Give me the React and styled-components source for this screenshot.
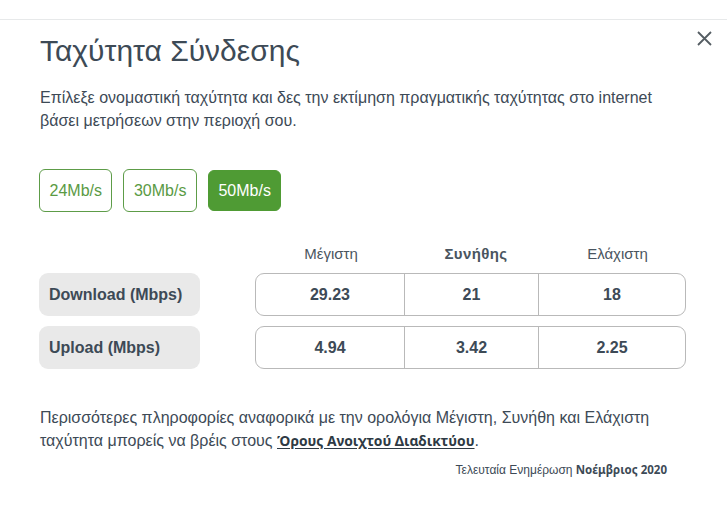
import React from "react";
import styled, { createGlobalStyle } from "styled-components";

const GlobalStyle = createGlobalStyle`
  html, body { margin: 0; padding: 0; background: #fff; }
  body { font-family: "Liberation Sans", Arial, sans-serif; }
`;

const sans = `"Liberation Sans", Arial, sans-serif`;

const Modal = styled.div`
  position: relative;
  margin-top: 19px;
  border-top: 1px solid #e7e9ea;
  padding: 13px 40px 0 40px;
  height: 496px;
  box-sizing: border-box;
  font-family: ${sans};
  color: #3d4a56;
`;

const Close = styled.button`
  position: absolute;
  top: 9px;
  right: 14px;
  width: 18px;
  height: 18px;
  padding: 0;
  border: 0;
  background: none;
  cursor: pointer;
  display: flex;
  align-items: center;
  justify-content: center;
`;

const Title = styled.h1`
  margin: 0;
  font-family: ${sans};
  font-weight: 400;
  font-size: 30px;
  line-height: 36px;
  color: #3d4a56;
`;

const Text = styled.p`
  margin: ${(p) => p.$mt}px 0 0 0;
  font-family: ${sans};
  font-size: 16px;
  line-height: 23px;
  color: #3d4a56;
`;

const Speeds = styled.div`
  display: flex;
  gap: 11px;
  margin-top: 37px;
  margin-left: -1px;
`;

const SpeedButton = styled.button`
  height: 43px;
  padding: 0 9.5px;
  border-radius: 6px;
  border: 1px solid ${(p) => (p.$active ? "#4f9b34" : "#5d9c48")};
  background: ${(p) => (p.$active ? "#4f9b34" : "#fff")};
  color: ${(p) => (p.$active ? "#fff" : "#5a9a44")};
  font-family: ${sans};
  font-size: 16px;
  cursor: pointer;
  ${(p) => p.$active && "height: 41px; margin-top: 1px;"}
`;

const Table = styled.div`
  margin-top: 31px;
  display: grid;
  grid-template-columns: 161px 1fr;
  column-gap: 55px;
  row-gap: 10px;
  width: 647px;
  margin-left: -1px;
`;

const HeadRow = styled.div`
  grid-column: 2;
  display: grid;
  grid-template-columns: 148px 134px 1fr;
  height: 20px;
  align-items: center;
`;

const Head = styled.div`
  text-align: center;
  font-family: ${sans};
  font-size: 15px;
  font-weight: ${(p) => (p.$bold ? 700 : 400)};
  color: #4a5560;
  letter-spacing: ${(p) => (p.$bold ? "0.4px" : "0")};
  padding-left: ${(p) => (p.$shift ? "12px" : "4px")};
`;

const Label = styled.div`
  grid-column: 1;
  height: 43px;
  border-radius: 9px;
  background: #e9e9e9;
  display: flex;
  align-items: center;
  padding-left: 10px;
  font-family: ${sans};
  font-weight: 700;
  font-size: 16px;
  color: #3d4a56;
`;

const Values = styled.div`
  grid-column: 2;
  height: 43px;
  box-sizing: border-box;
  border: 1px solid #b9b9b9;
  border-radius: 9px;
  display: grid;
  grid-template-columns: 148px 134px 1fr;
`;

const Cell = styled.div`
  display: flex;
  align-items: center;
  justify-content: center;
  font-family: ${sans};
  font-weight: 700;
  font-size: 16px;
  color: #3d4a56;
  & + & { border-left: 1px solid #b9b9b9; }
`;

const TermsLink = styled.a`
  font-family: "Noto Sans", "Open Sans", sans-serif;
  font-weight: 700;
  font-size: 13.8px;
  color: #2e3a44;
  text-decoration: underline;
  text-underline-offset: 2px;
`;

const Updated = styled.div`
  margin-top: 10px;
  width: 627px;
  text-align: right;
  font-family: ${sans};
  font-size: 12px;
  line-height: 16px;
  color: #3d4a56;
`;

const Strong = styled.span`
  font-family: "Noto Sans", "Open Sans", sans-serif;
  font-weight: 700;
  font-size: 11.5px;
`;

const speeds = ["24Mb/s", "30Mb/s", "50Mb/s"];
const rows = [
  { label: "Download (Mbps)", values: ["29.23", "21", "18"] },
  { label: "Upload (Mbps)", values: ["4.94", "3.42", "2.25"] },
];

export default function App() {
  return (
    <>
      <GlobalStyle />
      <Modal>
        <Close aria-label="close">
          <svg width="15" height="15" viewBox="0 0 15 15">
            <path d="M1 1 L14 14 M14 1 L1 14" stroke="#555d63" strokeWidth="1.8" fill="none" />
          </svg>
        </Close>
        <Title>Ταχύτητα Σύνδεσης</Title>
        <Text $mt={17}>
          Επίλεξε ονομαστική ταχύτητα και δες την εκτίμηση πραγματικής ταχύτητας στο internet
          <br />
          βάσει μετρήσεων στην περιοχή σου.
        </Text>
        <Speeds>
          {speeds.map((s, i) => (
            <SpeedButton key={s} $active={i === 2}>
              {s}
            </SpeedButton>
          ))}
        </Speeds>
        <Table>
          <HeadRow>
            <Head>Μέγιστη</Head>
            <Head $bold $shift>Συνήθης</Head>
            <Head $shift>Ελάχιστη</Head>
          </HeadRow>
          {rows.map((r) => (
            <React.Fragment key={r.label}>
              <Label>{r.label}</Label>
              <Values>
                {r.values.map((v, i) => (
                  <Cell key={i}>{v}</Cell>
                ))}
              </Values>
            </React.Fragment>
          ))}
        </Table>
        <Text $mt={37}>
          Περισσότερες πληροφορίες αναφορικά με την ορολόγια Μέγιστη, Συνήθη και Ελάχιστη
          <br />
          ταχύτητα μπορείς να βρέις στους <TermsLink href="#">Όρους Ανοιχτού Διαδικτύου</TermsLink>.
        </Text>
        <Updated>
          Τελευταία Ενημέρωση <Strong>Νοέμβριος 2020</Strong>
        </Updated>
      </Modal>
    </>
  );
}
